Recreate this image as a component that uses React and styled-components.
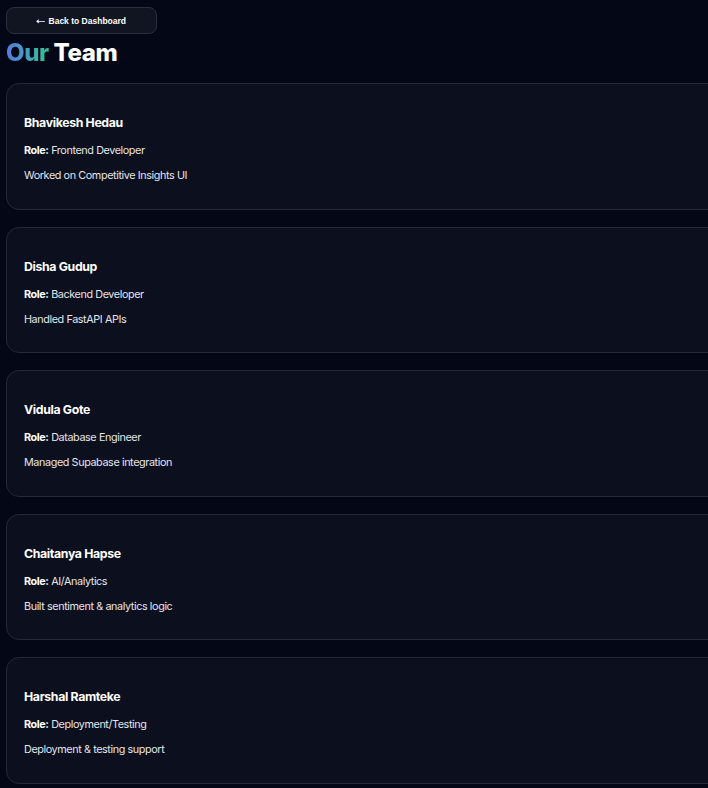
import React from 'react';
import styled, { createGlobalStyle } from 'styled-components';

const GlobalStyle = createGlobalStyle`
  html, body {
    margin: 0;
    padding: 0;
    background: #040716;
    overflow-x: hidden;
  }
  body {
    font-family: Inter, "Noto Sans", sans-serif;
    color: #e6e8ee;
  }
`;

const Page = styled.div`
  padding: 7px 0 0 6px;
  min-height: 788px;
  box-sizing: border-box;
`;

const BackButton = styled.button`
  display: flex;
  align-items: center;
  justify-content: center;
  gap: 2px;
  width: 151px;
  height: 27px;
  background: #111522;
  border: 1px solid #2a2e3d;
  border-radius: 8px;
  color: #ffffff;
  font-family: "Liberation Sans", Arial, sans-serif;
  font-weight: 700;
  font-size: 8.5px;
  cursor: pointer;
  padding: 0;
`;

const Arrow = styled.span`
  font-family: "DejaVu Sans", sans-serif;
  font-weight: 400;
  font-size: 9px;
  transform: scaleX(1.3);
  margin-right: 2px;
`;

const Title = styled.h1`
  margin: 5px 0 16px;
  font-size: 24px;
  font-weight: 800;
  line-height: 28px;
  letter-spacing: -0.4px;
  color: #ffffff;
`;

const Gradient = styled.span`
  background: linear-gradient(90deg, #5a78e0 0%, #3fa7b8 55%, #36c08f 100%);
  -webkit-background-clip: text;
  background-clip: text;
  color: transparent;
`;

const List = styled.div`
  display: flex;
  flex-direction: column;
  gap: 17px;
  width: 760px;
`;

const Card = styled.div`
  background: #0c0f1e;
  border: 1px solid #24283a;
  border-radius: 13px;
  padding: 29px 17px 22px;
  height: 126.5px;
  box-sizing: border-box;
`;

const Name = styled.h3`
  margin: 0 0 8px;
  font-size: 12.3px;
  line-height: 20px;
  font-weight: 700;
  color: #ffffff;
  letter-spacing: -0.35px;
`;

const Line = styled.p`
  margin: 0 0 5px;
  font-size: 10.8px;
  line-height: 20px;
  color: #e3e5ea;
  letter-spacing: -0.4px;

  strong {
    font-weight: 700;
    color: #ffffff;
  }
`;

const team = [
  { name: 'Bhavikesh Hedau', role: 'Frontend Developer', desc: 'Worked on Competitive Insights UI' },
  { name: 'Disha Gudup', role: 'Backend Developer', desc: 'Handled FastAPI APIs' },
  { name: 'Vidula Gote', role: 'Database Engineer', desc: 'Managed Supabase integration' },
  { name: 'Chaitanya Hapse', role: 'AI/Analytics', desc: 'Built sentiment & analytics logic' },
  { name: 'Harshal Ramteke', role: 'Deployment/Testing', desc: 'Deployment & testing support' },
];

export default function App() {
  return (
    <>
      <GlobalStyle />
      <Page>
        <BackButton>
          <Arrow>←</Arrow>Back to Dashboard
        </BackButton>
        <Title>
          <Gradient>Our</Gradient> Team
        </Title>
        <List>
          {team.map((m) => (
            <Card key={m.name}>
              <Name>{m.name}</Name>
              <Line>
                <strong>Role:</strong> {m.role}
              </Line>
              <Line>{m.desc}</Line>
            </Card>
          ))}
        </List>
      </Page>
    </>
  );
}
